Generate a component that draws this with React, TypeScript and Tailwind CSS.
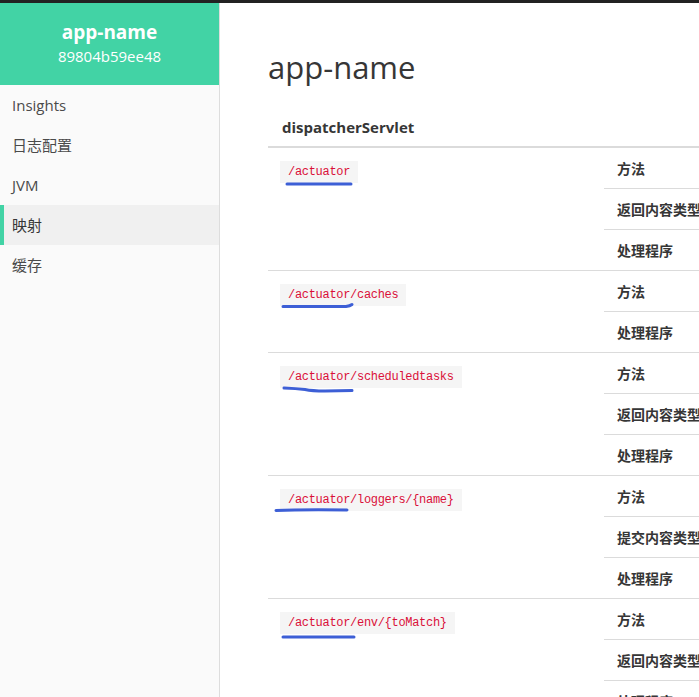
import React from "react";

const sans = '"Open Sans", "Noto Sans CJK SC", sans-serif';
const mono = '"Liberation Mono", "Noto Sans CJK SC", monospace';

type Row = { path: string; labels: string[]; line: React.ReactNode };

const rows: Row[] = [
  {
    path: "/actuator",
    labels: ["方法", "返回内容类型", "处理程序"],
    line: <path d="M7 23 L71 23" />,
  },
  {
    path: "/actuator/caches",
    labels: ["方法", "处理程序"],
    line: <path d="M3 22.5 L66 22.5 Q70 22 72 20.5" />,
  },
  {
    path: "/actuator/scheduledtasks",
    labels: ["方法", "返回内容类型", "处理程序"],
    line: <path d="M4 22 Q16 22.5 25 23.5 Q32 25 45 25 L72 24.5" />,
  },
  {
    path: "/actuator/loggers/{name}",
    labels: ["方法", "提交内容类型", "处理程序"],
    line: <path d="M-4 21.5 Q20 20.5 67 21" />,
  },
  {
    path: "/actuator/env/{toMatch}",
    labels: ["方法", "返回内容类型", "处理程序"],
    line: <path d="M3 25 L74 25" />,
  },
];

const nav = ["Insights", "日志配置", "JVM", "映射", "缓存"];

export default function App() {
  return (
    <div
      className="flex h-[697px] w-[699px] flex-col overflow-hidden bg-white"
      style={{ fontFamily: sans }}
    >
      <div className="h-[3px] shrink-0 bg-[#222222]" />
      <div className="flex min-h-0 flex-1">
        <aside className="w-[220px] shrink-0 border-r border-[#dddddd] bg-[#fafafa]">
          <div className="flex h-[82px] flex-col items-center justify-center bg-[#42d3a5] pb-[2px] text-white">
            <div className="text-[19px] font-bold leading-[26px]">app-name</div>
            <div className="text-[15px] leading-[22px]">89804b59ee48</div>
          </div>
          <nav className="flex flex-col">
            {nav.map((n) => {
              const active = n === "映射";
              return (
                <div
                  key={n}
                  className={
                    active
                      ? "flex h-[40px] items-center border-l-[4px] border-[#42d3a5] bg-[#f0f0f0] pl-[8px] text-[15px] text-[#363636]"
                      : "flex h-[40px] items-center pl-[12px] text-[15px] text-[#4a4a4a]"
                  }
                >
                  {n}
                </div>
              );
            })}
          </nav>
        </aside>
        <main className="min-w-0 flex-1 overflow-hidden pl-[48px] pt-[46px]">
          <h1 className="mb-[24px] text-[31px] leading-[36px] font-normal text-[#363636]">
            app-name
          </h1>
          <div className="w-[600px]">
            <div className="flex h-[39px] items-center border-b-2 border-[#dbdbdb] pl-[14px] text-[15px] font-bold text-[#363636]">
              dispatcherServlet
            </div>
            {rows.map((r) => (
              <div key={r.path} className="flex border-b border-[#dbdbdb]">
                <div className="w-[336px] shrink-0 pl-[12px] pt-[9px]">
                  <span className="relative inline-block">
                    <code
                      className="block h-[22px] bg-[#f5f5f5] px-[8px] text-[12px] leading-[22px] tracking-[-0.3px] text-[#da1039]"
                      style={{ fontFamily: mono }}
                    >
                      {r.path}
                    </code>
                    <svg
                      className="pointer-events-none absolute left-0 top-0 overflow-visible"
                      width="90"
                      height="30"
                      fill="none"
                      stroke="#3d5fd6"
                      strokeWidth="3"
                      strokeLinecap="round"
                    >
                      {r.line}
                    </svg>
                  </span>
                </div>
                <div className="flex flex-1 flex-col">
                  {r.labels.map((l, i) => (
                    <div
                      key={l + i}
                      className={
                        i === 0
                          ? "flex h-[40px] items-center pl-[13px] text-[14px] font-bold text-[#363636]"
                          : "flex h-[41px] items-center border-t border-[#dbdbdb] pl-[13px] text-[14px] font-bold text-[#363636]"
                      }
                    >
                      {l}
                    </div>
                  ))}
                </div>
              </div>
            ))}
          </div>
        </main>
      </div>
    </div>
  );
}
